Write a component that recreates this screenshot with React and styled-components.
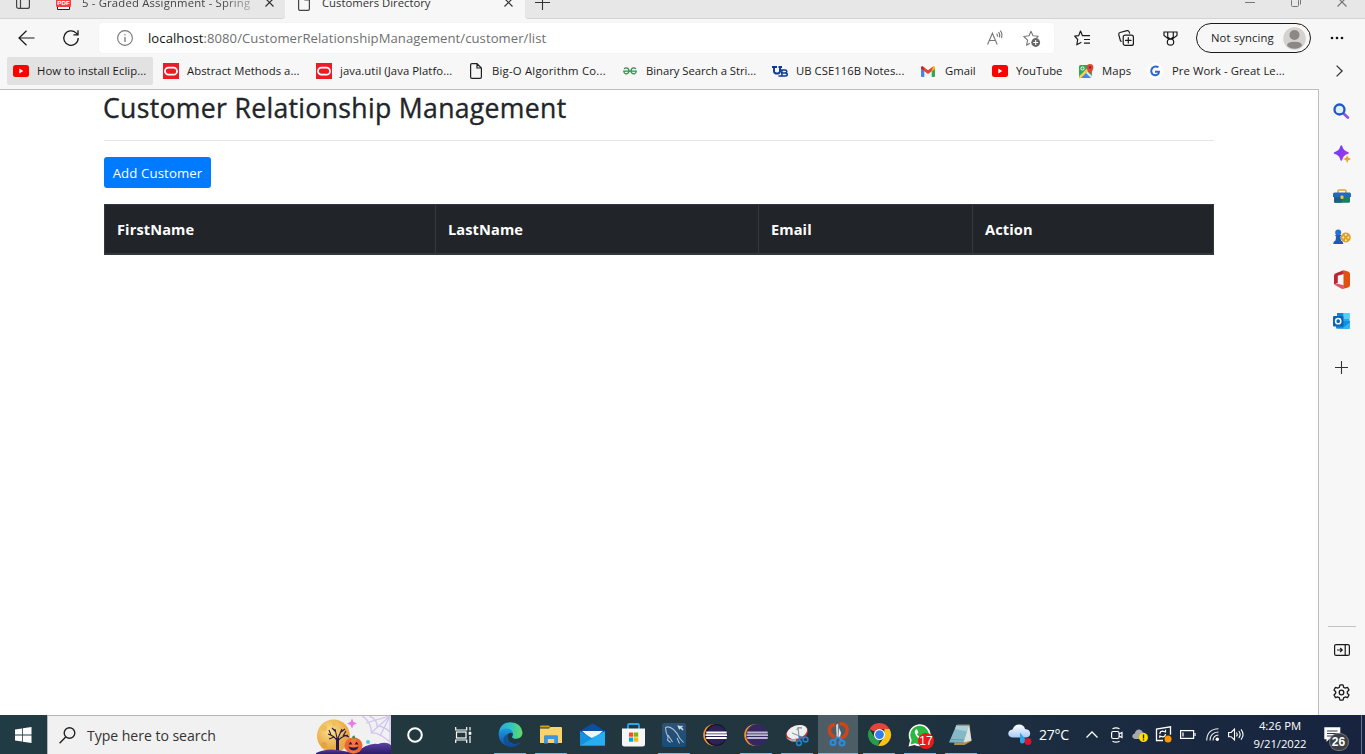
import React from "react";
import styled, { createGlobalStyle, css } from "styled-components";

const GlobalStyle = createGlobalStyle`
  * { box-sizing: border-box; }
  html, body { margin: 0; padding: 0; }
  body {
    width: 1365px;
    height: 754px;
    overflow: hidden;
    background: #fff;
    font-family: "Open Sans", "Noto Sans", sans-serif;
  }
  svg { display: block; flex: none; overflow: visible; }
`;

const Screen = styled.div`
  display: flex;
  flex-direction: column;
  width: 1365px;
  height: 754px;
  overflow: hidden;
`;

const Label = styled.span`
  display: block;
  flex: none;
  white-space: nowrap;
  font-size: ${(p) => p.$size || 11.3}px;
  letter-spacing: ${(p) => p.$ls || 0}px;
  color: ${(p) => p.$color || "#1b1b1b"};
`;

/* A fixed-width cell that centres its icon */
const Cell = styled.div`
  display: flex;
  flex: none;
  align-items: center;
  justify-content: center;
  width: ${(p) => p.$w}px;
  height: 100%;
`;

/* ---------- Tab strip ---------- */

const TabStrip = styled.div`
  display: flex;
  align-items: flex-end;
  height: 19px;
  flex: none;
  overflow: hidden;
  background: #f7f7f7;
`;

const StripSection = styled.div`
  display: flex;
  align-items: center;
  flex: none;
  width: ${(p) => p.$w}px;
  height: 32px;
  padding-bottom: 1px;
  background: ${(p) => (p.$active ? "#f7f7f7" : "#e7e7e7")};
  ${(p) => !p.$active && css`border-bottom: 1px solid #d3d3d3;`}
  border-radius: ${(p) => p.$radius || 0};
`;

const StripDivider = styled.div`
  width: 1px;
  height: 20px;
  background: #8b8b8b;
`;

const TabTitle = styled(Label)`
  width: ${(p) => p.$w}px;
  overflow: hidden;
  ${(p) => p.$fade && css`
    mask-image: linear-gradient(to right, #000 82%, rgba(0, 0, 0, 0.35));
  `}
`;

const Spacer = styled.div`
  flex: none;
  width: ${(p) => p.$w}px;
`;

/* ---------- Toolbar ---------- */

const Toolbar = styled.div`
  display: flex;
  align-items: center;
  height: 38px;
  flex: none;
  background: #f7f7f7;
`;

const AddressBar = styled.div`
  display: flex;
  align-items: center;
  width: 955px;
  height: 30px;
  margin-left: 1px;
  background: #fff;
  border-radius: 4px;
  box-shadow: 0 0 2px rgba(0, 0, 0, 0.06);
`;

const UrlText = styled(Label)`
  width: 834px;
  padding-left: 1px;
  b { font-weight: 400; color: #111; }
`;

const ProfilePill = styled.div`
  display: flex;
  align-items: center;
  justify-content: space-between;
  width: 115px;
  height: 30px;
  padding: 0 4px 0 14px;
  border: 1px solid #1a1a1a;
  border-radius: 15px;
`;

/* ---------- Bookmarks ---------- */

const BookmarkBar = styled.div`
  display: flex;
  align-items: center;
  height: 32px;
  flex: none;
  padding: 0 0 4px 7px;
  background: #f7f7f7;
`;

const BookmarkSlot = styled.div`
  flex: none;
  width: ${(p) => p.$w}px;
`;

const Bookmark = styled.div`
  display: flex;
  align-items: center;
  width: ${(p) => (p.$hover ? "146px" : "100%")};
  height: 28px;
  padding-left: 6px;
  border-radius: 2px;
  background: ${(p) => (p.$hover ? "#e2e2e2" : "transparent")};
`;

const BookmarkLabel = styled(Label)`
  padding-bottom: 2px;
`;

const BookmarkIcon = styled.div`
  display: flex;
  align-items: center;
  flex: none;
  width: ${(p) => p.$w || 24}px;
  height: 16px;
`;

/* ---------- Page and sidebar ---------- */

const Middle = styled.div`
  display: flex;
  height: 626px;
  flex: none;
`;

const Page = styled.main`
  width: 1319px;
  border-top: 1px solid #bdbdbd;
  border-right: 1px solid #bdbdbd;
  background: #fff;
  padding: 0 104px;
`;

const Heading = styled.h2`
  margin: 0 0 0 -1px;
  height: 50px;
  padding-top: 1px;
  font-size: 26.6px;
  letter-spacing: 0.32px;
  line-height: 35px;
  font-weight: 500;
  -webkit-text-stroke: 0.35px #212529;
  color: #212529;
  white-space: nowrap;
`;

const Rule = styled.hr`
  width: 1110px;
  margin: 0 0 16px;
  border: 0;
  border-top: 1px solid #e5e5e5;
`;

const AddButton = styled.button`
  display: block;
  width: 107px;
  height: 31px;
  margin: 0 0 16px;
  padding: 0;
  border: 0;
  border-radius: 3px;
  background: #007bff;
  color: #fff;
  font-family: inherit;
  font-size: 13.2px;
  letter-spacing: 0.12px;
  white-space: nowrap;
`;

const CustomerTable = styled.table`
  width: 1109px;
  table-layout: fixed;
  border-collapse: collapse;
`;

const HeadCell = styled.th`
  width: ${(p) => p.$w}px;
  height: 49px;
  padding: 0 12px;
  border: 1px solid #32383e;
  border-bottom-width: 2px;
  background: #212529;
  color: #fff;
  text-align: left;
  font-size: 14.6px;
  letter-spacing: 0.1px;
  font-weight: 700;
`;

const Sidebar = styled.aside`
  display: flex;
  flex-direction: column;
  align-items: center;
  width: 46px;
  padding: 1px 1px 0 0;
  background: #f7f7f7;
`;

const SideItem = styled.div`
  display: flex;
  align-items: center;
  justify-content: center;
  height: ${(p) => p.$h || 42}px;
`;

const SideFooter = styled.div`
  display: flex;
  flex-direction: column;
  align-items: center;
  width: 28px;
  margin-top: auto;
  padding: 2px 0 2px;
  border-top: 1px solid #c2c2c2;
`;

/* ---------- Taskbar ---------- */

const Taskbar = styled.footer`
  display: flex;
  align-items: stretch;
  height: 39px;
  flex: none;
  background: linear-gradient(to right, #213b44 0%, #22383f 30%, #21353e 62%, #1b2c40 78%, #17233f 100%);
`;

const SearchBox = styled.div`
  display: flex;
  align-items: center;
  width: 344px;
  border-top: 1px solid #b5b5b5;
  border-left: 1px solid #b5b5b5;
  background: #f1f1f1;
  overflow: hidden;
`;

const SearchArt = styled.div`
  margin-left: auto;
`;

const AppSlot = styled.div`
  display: flex;
  align-items: center;
  justify-content: center;
  flex: none;
  width: 40px;
  margin-right: 1px;
  height: 39px;
  background: ${(p) => (p.$active ? "#4d5d66" : "transparent")};
  ${(p) => p.$open && css`
    background-image: linear-gradient(#76b9ed, #76b9ed);
    background-repeat: no-repeat;
    background-position: center bottom;
    background-size: ${p.$active ? 40 : 32}px 1px;
  `}
`;

const BadgeAnchor = styled.div`
  position: relative;
  display: flex;
`;

const Badge = styled.span`
  position: absolute;
  left: ${(p) => p.$x}px;
  top: ${(p) => p.$y}px;
  width: ${(p) => p.$w}px;
  height: ${(p) => p.$h}px;
  line-height: ${(p) => p.$h}px;
  border-radius: 10px;
  background: ${(p) => p.$bg};
  box-shadow: ${(p) => (p.$ring ? "0 0 0 1px #77797c" : "none")};
  color: #fff;
  text-align: center;
  font-size: 12px;
  font-weight: ${(p) => (p.$ring ? 700 : 400)};
  font-family: "Liberation Sans", sans-serif;
`;

const Clock = styled.div`
  display: flex;
  flex-direction: column;
  align-items: center;
  width: 64px;
  padding-top: 2px;
  line-height: 18px;
`;

const ShowDesktop = styled.div`
  width: 1px;
  margin-left: auto;
  margin-right: 3px;
  background: #67728a;
`;

/* ---------- Icons ---------- */

const Svg = ({ w = 16, h = w, vb, children, ...rest }) => (
  <svg width={w} height={h} viewBox={vb || `0 0 ${w} ${h}`} fill="none" {...rest}>
    {children}
  </svg>
);

const CloseIcon = ({ s = 9, c = "#333" }) => (
  <Svg w={s} stroke={c} strokeWidth="1.2"><path d={`M.5.5 ${s - 0.5} ${s - 0.5}M${s - 0.5}.5.5 ${s - 0.5}`} /></Svg>
);
const PlusIcon = ({ s = 13, c = "#333" }) => (
  <Svg w={s} stroke={c} strokeWidth="1.1"><path d={`M${s / 2} 0V${s}M0 ${s / 2}H${s}`} /></Svg>
);
const TabActions = () => (
  <Svg w={14} stroke="#444" strokeWidth="1.2"><rect x=".6" y=".6" width="12.8" height="12.8" rx="2" /><path d="M4.5 1v12.500" /></Svg>
);
const PdfIcon = () => (
  <Svg w={15} h={15}>
    <path d="M1.500 1h12v13.500h-12z" fill="#fff" stroke="#222" />
    <rect width="15" height="10" y="2" rx="1" fill="#f0403c" />
    <text x="7.500" y="9.800" fontSize="6.200" fontWeight="700" fill="#fff" textAnchor="middle" fontFamily="Liberation Sans">PDF</text>
  </Svg>
);
const DocIcon = ({ c = "#222" }) => (
  <Svg w={12} h={16} stroke={c} strokeWidth="1.200"><path d="M7 .6H2Q.6.6.6 2v12q0 1.400 1.400 1.400h8q1.400 0 1.400-1.400V5zM7 .6V5h4.400" /></Svg>
);
const BackIcon = () => (
  <Svg w={17} h={16} stroke="#1a1a1a" strokeWidth="1.200"><path d="M8.500.8 1 8l7.500 7.200M1 8h15.500" /></Svg>
);
const ReloadIcon = () => (
  <Svg w={16} h={16} stroke="#1a1a1a" strokeWidth="1.300"><path d="M15.200 8A7.200 7.200 0 1 1 13 2.900l1.800 1.700M15 .2v4.600h-4.600" /></Svg>
);
const InfoIcon = () => (
  <Svg w={16} stroke="#777" strokeWidth="1.100"><circle cx="8" cy="8" r="7.400" /><path d="M8 7v5M8 4.200v1.300" strokeWidth="1.300" /></Svg>
);
const ReadAloud = () => (
  <Svg w={16} h={14} stroke="#777" strokeWidth="1.100">
    <path d="M.6 13.500 5.400 2.200 10.200 13.500M2.300 9.500h6.200M9.600 2.500q1.300 1.500.6 3.300M11.500 1q2 2.300.9 5.400M13.300-.3q2.600 3.200 1.100 7.300" />
  </Svg>
);
const StarAdd = () => (
  <Svg w={17} h={17}>
    <path d="M8 1.200 10 5.700l5.200.6-1.800 1.900M6.800 13.200 3.600 15.200 4.600 10.100.8 6.500 6 5.800 8 1.200" stroke="#777" strokeWidth="1.100" strokeLinejoin="round" />
    <circle cx="12.700" cy="12.500" r="4.400" fill="#666" /><path d="M12.700 10v5M10.200 12.500h5" stroke="#fff" strokeWidth="1.100" />
  </Svg>
);
const StarList = () => (
  <Svg w={17} h={16} stroke="#1a1a1a" strokeWidth="1.200" strokeLinejoin="round">
    <path d="M8.500 5.700 6.500 1 4.700 5.600.7 6.200 3.700 9.500 2.800 14.800 7.300 12.300M6.500 1l2 4.700H16M10 9.500h6M10 13.200h6" />
  </Svg>
);
const CollectionsIcon = () => (
  <Svg w={16} h={16} stroke="#1a1a1a" strokeWidth="1.200" strokeLinecap="round">
    <rect x="5.200" y="5.200" width="10.200" height="10.200" rx="2" /><path d="M10.300 7.500v5.600M7.500 10.300h5.600M3.300 11.300 2.500 11 .8 4.800Q.4 3 2 2.500L9 .7q1.600-.4 2.200 1.200l.4 1.200" />
  </Svg>
);
const RewardsIcon = () => (
  <Svg w={15} h={15} stroke="#1a1a1a" strokeWidth="1.200">
    <path d="M1 1h13v3.500L9.500 8h-4L1 4.500zM4.700 1v5L7 8M10.300 1v5L8 8" /><circle cx="7.500" cy="11" r="3.200" />
  </Svg>
);
const Avatar = () => (
  <Svg w={23} h={23}><circle cx="11.500" cy="11.500" r="11.300" fill="#d4d1ce" /><circle cx="11.500" cy="8" r="5" fill="#8b8886" /><path d="M4 18.800q0-4 7.500-4t7.500 4q-3 3-7.500 3t-7.500-3" fill="#8b8886" /></Svg>
);
const DotsIcon = () => (
  <Svg w={14} h={4} fill="#111"><circle cx="2" cy="2" r="1.300" fill="#111" /><circle cx="7" cy="2" r="1.300" fill="#111" /><circle cx="12" cy="2" r="1.300" fill="#111" /></Svg>
);

const YouTubeIcon = () => (<Svg w={16} h={12}><rect width="16" height="12" rx="2.500" fill="#f00" /><path d="M6.300 3.500v5l4-2.500z" fill="#fff" /></Svg>);
const OracleIcon = () => (<Svg w={16}><rect width="16" height="16" fill="#ed1c24" /><rect x="2" y="4.700" width="12" height="7" rx="3.500" stroke="#fff" strokeWidth="1.800" /></Svg>);
const GfgIcon = () => (
  <Svg w={14} h={8} stroke="#2f8d46" strokeWidth="1.300">
    <path d="M1 1.700Q3 .2 5 1.400 6.500 2.800 5.800 5 4.700 7.300 2.500 6.800 1 6.400.8 4.200H13.200Q13 6.400 11.500 6.800 9.300 7.300 8.200 5 7.500 2.800 9 1.400q2-1.200 4 .3" />
  </Svg>
);
const UbIcon = () => (
  <Svg w={16} h={11} stroke="#0b3a9b">
    <path d="M0 1h5M6.500 1h3.500M2 1v4.500q.3 2 3 2t3-2V1" strokeWidth="1.900" /><path d="M8.500 4H13q1.800 0 1.800 1.500T13 7H9m4 0q2.300 0 2.300 1.500T13 10H6.500M9.900 4v6" strokeWidth="1.500" />
  </Svg>
);
const GmailIcon = () => (
  <Svg w={14} h={11}>
    <path d="M0 2.500V10q0 1 1 1h2.300V5z" fill="#4285f4" /><path d="M14 2.500V10q0 1-1 1h-2.300V5z" fill="#34a853" />
    <path d="M0 1.500Q0 0 1.300 0L3.300 1.500V5.300L0 2.800z" fill="#c5221f" /><path d="M14 1.500Q14 0 12.700 0L10.700 1.500V5.300L14 2.800z" fill="#fbbc04" />
    <path d="M2 .4 7 4.200 12 .4 10.700 5.300 7 8 3.300 5.300z" fill="#ea4335" />
  </Svg>
);
const MapsIcon = () => (
  <Svg w={15} h={15}>
    <rect y="1" width="13" height="13" rx="1.500" fill="#34a853" /><path d="m2 14 5-5.500 5.500 5.500z" fill="#4285f4" /><path d="M0 12.500 11.500 1 13 3 2 14H1z" fill="#fbd14b" /><path d="M8.500 7.500 13 12v2h-1L7 9z" fill="#e8e8e8" />
    <circle cx="3.500" cy="4.500" r="1.600" stroke="#fff" /><path d="M11 9.800Q7.700 6 7.700 3.400a3.300 3.300 0 0 1 6.600 0Q14.300 6 11 9.800" fill="#e4453a" /><circle cx="11" cy="3.400" r="1.200" fill="#8f211b" />
  </Svg>
);
const GreatIcon = () => (
  <Svg w={16}><circle cx="8" cy="8" r="8" fill="#fff" /><path d="M11.500 4.300Q8 2.300 5.300 5 3.200 8 5.200 11q3 2.400 5.800.3 1-1 1-2.600H8" stroke="#2c65d6" strokeWidth="1.900" /></Svg>
);
const ChevronRight = () => (<Svg w={7} h={12} stroke="#333" strokeWidth="1.300"><path d="m.6.6 5.500 5.400-5.500 5.400" /></Svg>);

const SideSearch = () => (
  <Svg w={17} h={17}><path d="m10 10 4.800 4.500" stroke="#8d55e0" strokeWidth="2.800" strokeLinecap="round" /><circle cx="6.500" cy="6.500" r="5" fill="#dff0fb" stroke="#1c57c8" strokeWidth="2.300" /></Svg>
);
const SideSparkle = () => (
  <Svg w={18} h={18}>
    <defs><linearGradient id="spark" x1="0" x2="1" y2="1"><stop stopColor="#4b5bf0" /><stop offset=".5" stopColor="#8f35f2" /><stop offset="1" stopColor="#b543e8" /></linearGradient></defs>
    <path d="M8.300.3Q9 .3 9.400 1.600 10.400 5.800 14.700 7q1.300.4 1.300 1t-1.300 1Q10.400 10.200 9.400 14.400q-.4 1.300-1.100 1.300T7.200 14.400Q6.200 10.200 1.900 9 .6 8.600.6 8t1.300-1Q6.200 5.800 7.200 1.600 7.600.3 8.300.3" fill="url(#spark)" />
    <path d="M14.200 10.300 15.400 12.800l2.800 1.200-2.800 1.200-1.200 2.800-1.200-2.800-2.800-1.200 2.800-1.200z" fill="#e9a52d" />
  </Svg>
);
const SideTools = () => (
  <Svg w={18} h={14}>
    <path d="M5 4V2.200Q5 1 6.300 1h5.400Q13 1 13 2.200V4" stroke="#e3a62b" strokeWidth="1.600" /><rect x="1" y="5" width="16" height="8.800" rx="1.300" fill="#16805f" /><rect x="1" y="5" width="8" height="8.800" rx="1.300" fill="#17657c" />
    <path d="M0 5q0-1.500 1.500-1.500h15Q18 3.500 18 5v3H0z" fill="#2268c5" /><rect x="7.500" y="6.500" width="3" height="3.500" rx="1" fill="#f2c047" />
  </Svg>
);
const SideGames = () => (
  <Svg w={18} h={16}>
    <circle cx="12.800" cy="8.500" r="5" fill="#dca029" /><g fill="#fff2c8"><circle cx="12.800" cy="5.800" r="1" /><circle cx="12.800" cy="11.200" r="1" /><circle cx="10.300" cy="8.500" r="1" /><circle cx="15.300" cy="8.500" r="1" /></g>
    <circle cx="5.200" cy="3.500" r="3" fill="#266fd8" /><path d="M2.300 6h5.800v1.300H7.300L8 11.500q2.300.7 2.300 3.500H.2q0-2.800 2.300-3.500l.7-4.200h-.9z" fill="#1d59b8" />
  </Svg>
);
const SideOffice = () => (
  <Svg w={16} h={19}>
    <path d="M9.500.2 14 1.400Q16 2 16 4v11q0 2-2 2.600l-4.500 1.200z" fill="#e0500f" /><path d="M9.500.2 1.800 3.300Q0 4 0 6v8.500l3.800-1.600V5.800l6-1.800z" fill="#bf2533" /><path d="M0 14.500l3.800-.8 6 1.500v3.500L8 19z" fill="#e0556a" />
  </Svg>
);
const SideOutlook = () => (
  <Svg w={17} h={16}>
    <rect x="4" width="12.500" height="13" rx="1" fill="#28a8ea" /><path d="M4 0h6.300v6H4z" fill="#1583cf" /><path d="M10.300 0h6.200v6h-6.200z" fill="#4fd0fa" /><path d="M3 8h14v6.500q0 1.300-1.300 1.300H4.300Q3 15.800 3 14.500z" fill="#1290df" /><path d="m9 15.800 8-6.500v5.200q0 1.300-1.300 1.300z" fill="#31b6f3" />
    <rect y="3" width="10.500" height="10.500" rx="1" fill="#0d64b7" /><circle cx="5.200" cy="8.200" r="2.600" stroke="#fff" strokeWidth="1.500" />
  </Svg>
);
const SidePanel = () => (
  <Svg w={16} h={12} stroke="#1a1a1a" strokeWidth="1.200"><rect x=".6" y=".6" width="14.800" height="10.800" rx="1.500" /><path d="M11.200 1v10M3 6h5.200M6.200 4l2 2-2 2" /></Svg>
);
const GearIcon = () => (
  <Svg w={17} h={17} stroke="#1a1a1a" strokeWidth="1.300" strokeLinejoin="round">
    <path d="M7 .9h3l.7 2.400q.8.300 1.400.8l2.400-.7 1.500 2.600-1.700 1.700v1.600l1.700 1.700-1.500 2.600-2.400-.7q-.6.500-1.400.8L10 16.100H7l-.7-2.400q-.8-.3-1.400-.8l-2.400.7L1 11l1.700-1.700V7.700L1 6l1.500-2.600 2.400.7q.6-.5 1.400-.8z" /><circle cx="8.500" cy="8.500" r="2.300" />
  </Svg>
);

const WindowsIcon = () => (
  <Svg w={17} h={16}><path fill="#fff" d="M0 2.400 7 1.400V7.600H0zM7.800 1.300 16.500 0v7.600H7.800zM0 8.400h7v6.200l-7-1zM7.800 8.400h8.700V16l-8.700-1.300z" /></Svg>
);
const TaskSearch = () => (<Svg w={17} h={17} stroke="#222" strokeWidth="1.400"><circle cx="10.500" cy="6" r="5.300" /><path d="M6.700 10 .6 16.300" /></Svg>);

const Halloween = () => (
  <Svg w={75} h={38}>
    <defs>
      <radialGradient id="moon" cx=".4" cy=".35"><stop stopColor="#fbe18a" /><stop offset="1" stopColor="#e9ab48" /></radialGradient>
      <linearGradient id="hill" x1="0" x2="0" y2="1"><stop stopColor="#5c43a0" /><stop offset="1" stopColor="#2b1b6b" /></linearGradient>
    </defs>
    <g stroke="#d3c3ef" strokeWidth="1.300"><path d="M46 0Q55 5 55.500 17q7-1 18.500 9M53 0q8 3 8 10 7 0 13 6M74 0 55 17M74 0 64 20M74 0 50 7M74 0V28" /></g>
    <circle cx="17.500" cy="20" r="16.500" fill="url(#moon)" /><circle cx="8" cy="12" r="3" fill="#edbd58" /><circle cx="18" cy="8" r="2" fill="#edbd58" /><circle cx="8" cy="29" r="3" fill="#e6a045" />
    <g stroke="#24184f" strokeWidth="1.100"><path d="M21.500 36V22" strokeWidth="3" /><path d="M21 25Q19 20 12 18M15 19l-2-5M18 21l-5 2M21 22 19 13M20 16l-4-4M22 22l4-9M25 16l4-3M22 25q2-4 10-6M27 20l3-5M28 19l5 2" /></g>
    <path d="M0 37Q10 32 22 34T42 38H0z" fill="url(#hill)" />
    <path d="M38 38Q52 26 62 28 70 25 75 29V38z" fill="url(#hill)" />
    <ellipse cx="37.500" cy="29.500" rx="9" ry="8" fill="#f06530" /><ellipse cx="37.500" cy="29.500" rx="4" ry="8" fill="#f5793a" /><path d="M36.500 22.500q-1-3 2-3l1 3z" fill="#3b8e43" /><path d="m32.500 28.500 2-3 2 3zM38.500 28.500l2-3 2 3zM32.500 30.500q5 2 10 0-1 4-5 4t-5-4" fill="#35184b" />
    <path d="M36 2.500 37.500 6 41 7.500 37.500 9 36 12.500 34.500 9 31 7.500 34.500 6z" fill="#e979ee" /><circle cx="52" cy="26" r="2" fill="#50c9db" />
  </Svg>
);

const CortanaIcon = () => (<Svg w={16}><circle cx="8" cy="8" r="6.800" stroke="#fff" strokeWidth="2" /></Svg>);
const TaskViewIcon = () => (
  <Svg w={17} h={16} stroke="#fff" strokeWidth="1.200"><path d="M.7 0v3h11V0M.7 16v-3h11v3M15 0v3.500M15 9v7" /><rect x="1.500" y="5" width="9.500" height="6" /><rect x="13.700" y="4.800" width="2.600" height="3" fill="#fff" stroke="none" /></Svg>
);
const EdgeIcon = () => (
  <Svg w={25} h={25}>
    <defs><linearGradient id="edgeTop" x1="0" x2="1"><stop stopColor="#2aa7e0" /><stop offset=".55" stopColor="#31c6bd" /><stop offset="1" stopColor="#67dc5c" /></linearGradient><linearGradient id="edgeBody" x1="0" x2="0" y2="1"><stop stopColor="#1b9de2" /><stop offset="1" stopColor="#0d4fa0" /></linearGradient></defs>
    <path d="M.6 11Q2 .5 12.500.3 23 .5 24.500 10.500 24.500 16.500 18 16.800q-5 0-3.500-3Q16 11.500 13 9.500 8 5.500.6 11" fill="url(#edgeTop)" />
    <path d="M.5 12Q2 6.500 8 6.500q6.500.3 6.800 5-3-2-5 1-2 6 4.500 9 4.500 1.500 8.200-1.300-4 5-10 4.800Q1 23 .5 12" fill="url(#edgeBody)" />
    <path d="M10 12Q7.500 16 11 20q4.500 4 11.500.2-4 5-10 4.800Q5 23 5.500 17 6 13 10 12" fill="#124a91" opacity=".75" />
  </Svg>
);
const FolderIcon = () => (
  <Svg w={22} h={19}><path d="M0 1.500Q0 .5 1 .5h8l1.500 2H0z" fill="#d99a24" /><path d="M0 3.500h9L10.500 2H21q1 0 1 1v15H0z" fill="#fbd36b" /><path d="M4 18.500V11.500q0-1.200 1.200-1.200h11.600q1.200 0 1.200 1.200v7h-3.800V14H7.800v4.500z" fill="#3f94dc" /></Svg>
);
const MailIcon = () => (
  <Svg w={25} h={23}><path d="M0 8 12.500.3 25 8v5H0z" fill="#0c4f9e" /><path d="M2 8h21L12.500 17z" fill="#f3f6f8" /><path d="M0 8.200 12.500 16 25 8.200V22.500H0z" fill="#1fa4ec" /><path d="m0 22.500 12.500-8L25 8.200v14.300z" fill="#27adf1" /><path d="M0 8.200v14.300l12.500-7z" fill="#1592df" /></Svg>
);
const StoreIcon = () => (
  <Svg w={23} h={24}><path d="M6 6V2.200Q6 1 7.200 1h8.600Q17 1 17 2.200V6" stroke="#25a9e8" strokeWidth="1.800" /><path d="M0 5.500h23V21q0 2.500-2.500 2.500h-18Q0 23.500 0 21z" fill="#f6f6f6" /><path fill="#f14f21" d="M7 9.500h4.200v4.200H7z" /><path fill="#7eb900" d="M12 9.500h4.200v4.200H12z" /><path fill="#00a3ee" d="M7 14.500h4.200v4.200H7z" /><path fill="#feb800" d="M12 14.500h4.200v4.200H12z" /></Svg>
);
const MysqlIcon = () => (
  <Svg w={24} h={24}><defs><linearGradient id="sea" x1="0" x2="0" y2="1"><stop stopColor="#2e5273" /><stop offset="1" stopColor="#164d7d" /></linearGradient></defs><rect width="24" height="24" rx="2.500" fill="url(#sea)" /><path d="M8.500 19.500 5.500 17 6 14Q3.500 9 3.500 4.500 7 2.500 11.500 6.500q4.500 4 6 8.500l4 4.500M6 12l4.500 7M15 15l2.500 5.500" stroke="#aebdc9" strokeWidth="1.100" /><path d="m17.500 3 3.500 4M16 2.500l1.500 3L20.500 3" stroke="#d2dde4" strokeWidth="1.500" /></Svg>
);
const EclipseIcon = ({ dim }) => (
  <Svg w={24} h={24}>
    <circle cx="11" cy="12" r="10.800" fill="#f6942b" /><circle cx="13" cy="12" r="11" fill={dim ? "#382b68" : "#111126"} /><circle cx="13.500" cy="12" r="10" fill={dim ? "#352760" : "#2c2255"} />
    <path d="M3.200 9.500h20.500M2.500 12.200h21.500M3.200 15h20.500" stroke={dim ? "#bcb9c8" : "#fff"} strokeWidth="1.800" />
  </Svg>
);
const SnipOval = () => (
  <Svg w={24} h={24}>
    <ellipse cx="12" cy="10" rx="11.500" ry="7.500" fill="#c83438" transform="rotate(-18 12 10)" /><ellipse cx="12" cy="9" rx="10.500" ry="6.500" fill="#edf0f1" transform="rotate(-18 12 9)" /><path d="M1 14.500q5 3 10 1v3q-6 1-10-4" fill="#aeb0b2" />
    <path d="m14 14-1-10M17 14 7 10M17 5q-5-1-5 2" stroke="#929a9e" strokeWidth="1.300" /><circle cx="14" cy="20" r="2.400" stroke="#277fc5" strokeWidth="1.600" /><circle cx="20.500" cy="16.500" r="2.400" stroke="#277fc5" strokeWidth="1.600" /><path d="m14.500 18 0-4 4 1" stroke="#277fc5" strokeWidth="1.800" />
  </Svg>
);
const SnipActive = () => (
  <Svg w={20} h={25}>
    <path d="M7 2.500Q1 3.500 1.500 8.500T7 15M11.500 1.800q6.500-.5 7.500 5 1 7-6.500 9.500" stroke="#cf4517" strokeWidth="3.500" />
    <path d="M8.700 16 8 3 10.200 1.500 10.500 16z" fill="#cfd4d8" /><path d="m10.500 16 .8-10 1.700 5-1.200 5z" fill="#eff2f4" /><path d="M9.500 14.500 7 18m3.500-3 3 3" stroke="#2d8ddd" strokeWidth="2" /><circle cx="5" cy="20.500" r="2.500" stroke="#2d8ddd" strokeWidth="2" /><circle cx="14" cy="21" r="2.500" stroke="#2d8ddd" strokeWidth="2" />
  </Svg>
);
const ChromeIcon = () => (
  <Svg w={23} h={23}>
    <path d="M1.500 6A11.300 11.300 0 0 1 21.500 6H11.500L7 9z" fill="#e3453a" /><path d="M1.500 6 7 15l4.500 2.500-1.500 5.400A11.300 11.300 0 0 1 1.500 6" fill="#299b4d" /><path d="M21.500 6A11.300 11.300 0 0 1 10 22.900L16.300 14V6z" fill="#fbc116" />
    <circle cx="11.500" cy="11.600" r="5.600" fill="#fff" /><circle cx="11.500" cy="11.600" r="4.400" fill="#327ee8" />
  </Svg>
);
const WhatsAppIcon = () => (
  <Svg w={24} h={24}><path d="M.5 23.500 2 17.500A11 11 0 1 1 6.500 22z" fill="#fff" /><path d="M2.500 21.500 3.700 17A9.300 9.300 0 1 1 7.300 20.300z" fill="#2cb742" /><path d="M8 6.500Q6 8 7 10.500 9.500 16 14.500 17q2.500.3 3-2.300l-3-1.500-1.500 1.600Q10 13.500 9 11l1.300-1.500L9 6.300z" fill="#fff" /></Svg>
);
const NotepadIcon = () => (
  <Svg w={24} h={23}><path d="M8.500 1.500h12L22.500 18l-7 4H5z" fill="#b98c46" /><path d="M7.500 2H20l-5.500 17.500H0z" fill="#86b9c8" /><path d="M7.500 2H20l-2 6.500L6 6z" fill="#a9d0d9" /><path d="M20 2 22.500 17.500 14.500 19.500z" fill="#dce3e4" /><path d="M9 1v2M11 1v2M13 1v2M15 1v2M17 1v2M19 1v2" stroke="#555" strokeWidth=".8" /><path d="m1 19 13.500.5M2 16.500l13 .5" stroke="#568fa2" strokeWidth=".8" /></Svg>
);

const WeatherIcon = () => (
  <Svg w={24} h={21}>
    <defs><linearGradient id="cloud" x1="0" x2="0" y2="1"><stop stopColor="#fff" /><stop offset="1" stopColor="#a8c8f5" /></linearGradient></defs>
    <path d="M5 13.500Q0 13 .3 9.300.7 6 4.500 5.500 6.500.3 11 .5q5 .2 6 4.500 5 .3 5.200 4.500 0 3.500-4 4z" fill="url(#cloud)" /><path d="M12 8.500l0 9q0 2 2 2 2.500 0 4-3.500z" fill="#29a4e4" /><circle cx="20" cy="17.500" r="3.400" fill="#d9142f" />
  </Svg>
);
const ChevronUp = () => (<Svg w={12} h={7} stroke="#fff" strokeWidth="1.300"><path d="M.5 6.500 6 1l5.500 5.500" /></Svg>);
const MeetIcon = () => (<Svg w={12} h={16} stroke="#fff" strokeWidth="1.200"><rect x=".6" y="4.500" width="7.500" height="7" rx="1.500" /><path d="m8 7 3-1.500v5L8 9M1.500 1.800q3.500-2 7 0M1.500 14.200q3.500 2 7 0" /></Svg>);
const CloudWarn = () => (<Svg w={16} h={14}><path d="M3 11Q0 10 .3 7.700.8 6 2.700 5.500 4 1 7.500 1.500 10 1.800 11 4.500q3 .3 3.200 3L12 11z" fill="#a5a9ad" /><circle cx="11.500" cy="9.500" r="4.500" fill="#ffe000" /><path d="M11.500 6.500v4M11.500 11.200v1.300" stroke="#222" strokeWidth="1.300" /></Svg>);
const SyncIcon = () => (<Svg w={17} h={17}><path d="M8 14.500H1.500V3L15.500.8v8" stroke="#fff" strokeWidth="1.300" /><path d="M4.800 8q.3-2.800 2.800-2.800L10.500 6V3.800M10.500 8q-.3 2.800-2.800 2.800L4.800 10v2" stroke="#fff" strokeWidth="1.200" /><circle cx="13" cy="13" r="3.500" fill="#ff9800" /></Svg>);
const BatteryIcon = () => (<Svg w={16} h={9} stroke="#fff" strokeWidth="1.200"><rect x=".6" y=".6" width="13" height="7.800" /><path d="M15 3v3M3 2.500v4" /></Svg>);
const WifiIcon = () => (<Svg w={13} h={13} stroke="#fff"><path d="M.7 12.500Q1 1 12.500.7M4 12.500Q4.200 4.300 12.500 4M7 12.500Q7.300 7.300 12.500 7" strokeWidth="1.100" opacity=".9" /><circle cx="11.300" cy="11.300" r="1.700" fill="#fff" stroke="none" /></Svg>);
const SoundIcon = () => (<Svg w={17} h={13} stroke="#fff" strokeWidth="1.100"><path d="M.6 4.500h2.500L6.500 1v11L3.100 8.700H.6zM8.500 4.500q1.400 2 0 4M10.800 3q2.700 3.500 0 7M13 1.300q4 5.200 0 10.400" /></Svg>);
const NoticeIcon = () => (<Svg w={17} h={16}><path d="M.3.3h16v12H5L2.500 15v-2.700H.3z" fill="#fff" /><path d="M3 4h10.500M3 6.500h10.500M3 9h8" stroke="#17233f" strokeWidth=".9" /></Svg>);

/* ---------- Data ---------- */

const bookmarks = [
  { text: "How to install Eclip...", icon: <YouTubeIcon />, w: 150, hover: true, ls: 0.06 },
  { text: "Abstract Methods a...", icon: <OracleIcon />, w: 153, ls: 0.05 },
  { text: "java.util (Java Platfo...", icon: <OracleIcon />, w: 154, ls: 0.07 },
  { text: "Big-O Algorithm Co...", icon: <DocIcon />, w: 153, iw: 22, ls: 0.22 },
  { text: "Binary Search a Stri...", icon: <GfgIcon />, w: 149, iw: 23, ls: -0.04 },
  { text: "UB CSE116B Notes...", icon: <UbIcon />, w: 149, ls: 0.04 },
  { text: "Gmail", icon: <GmailIcon />, w: 71 },
  { text: "YouTube", icon: <YouTubeIcon />, w: 87 },
  { text: "Maps", icon: <MapsIcon />, w: 68, iw: 23, ls: 0.1 },
  { text: "Pre Work - Great Le...", icon: <GreatIcon />, w: 188, iw: 25, ls: 0.06 },
];

const columns = [
  { name: "FirstName", w: 331 },
  { name: "LastName", w: 323 },
  { name: "Email", w: 214 },
  { name: "Action", w: 241 },
];

const apps = [
  { icon: <EdgeIcon />, open: true },
  { icon: <FolderIcon />, open: true },
  { icon: <MailIcon /> },
  { icon: <StoreIcon /> },
  { icon: <MysqlIcon />, open: true },
  { icon: <EclipseIcon /> },
  { icon: <EclipseIcon dim />, open: true },
  { icon: <SnipOval />, open: true },
  { icon: <SnipActive />, open: true, active: true },
  { icon: <ChromeIcon />, open: true },
  { icon: <WhatsAppIcon />, open: true, badge: "17" },
  { icon: <NotepadIcon />, open: true },
];

export default function App() {
  return (
    <>
      <GlobalStyle />
      <Screen>
        <TabStrip>
          <StripSection $w={285} $radius="0 0 4px 0">
            <Cell $w={46}><TabActions /></Cell>
            <StripDivider />
            <Spacer $w={10} />
            <PdfIcon />
            <Spacer $w={11} />
            <TabTitle $w={169} $fade $color="#444" $ls={0.18}>5 - Graded Assignment - Spring</TabTitle>
            <Cell $w={36}><CloseIcon /></Cell>
          </StripSection>
          <StripSection $w={240} $active>
            <Spacer $w={13} />
            <DocIcon c="#444" />
            <Spacer $w={12} />
            <TabTitle $w={182} $color="#333">Customers Directory</TabTitle>
            <CloseIcon />
          </StripSection>
          <StripSection $w={840} $radius="0 0 0 4px">
            <Cell $w={35}><PlusIcon s={15} /></Cell>
            <Spacer $w={667} />
            <Cell $w={46}><Svg w={10} h={2} stroke="#777"><path d="M0 1.500h10" /></Svg></Cell>
            <Cell $w={46}><Svg w={10} h={10} stroke="#777"><rect x=".5" y="2.500" width="7" height="7" rx="1" /><path d="M2.500.5H8q1.500 0 1.500 1.500v5.500" /></Svg></Cell>
            <Cell $w={46}><CloseIcon s={10} c="#777" /></Cell>
          </StripSection>
        </TabStrip>

        <Toolbar>
          <Spacer $w={5} />
          <Cell $w={43}><BackIcon /></Cell>
          <Cell $w={45}><ReloadIcon /></Cell>
          <Spacer $w={5} />
          <AddressBar>
            <Spacer $w={4} />
            <Cell $w={44}><InfoIcon /></Cell>
            <UrlText $size={13.1} $ls={0.065} $color="#6f6f6f"><b>localhost</b>:8080/CustomerRelationshipManagement/customer/list</UrlText>
            <Cell $w={28}><ReadAloud /></Cell>
            <Cell $w={44}><StarAdd /></Cell>
          </AddressBar>
          <Spacer $w={6} />
          <Cell $w={44}><StarList /></Cell>
          <Cell $w={44}><CollectionsIcon /></Cell>
          <Cell $w={44}><RewardsIcon /></Cell>
          <Spacer $w={4} />
          <ProfilePill><BookmarkLabel $ls={0.1}>Not syncing</BookmarkLabel><Avatar /></ProfilePill>
          <Spacer $w={4} />
          <Cell $w={44}><DotsIcon /></Cell>
        </Toolbar>

        <BookmarkBar>
          {bookmarks.map((b) => (
            <BookmarkSlot key={b.text} $w={b.w}>
              <Bookmark $hover={b.hover}>
                <BookmarkIcon $w={b.iw}>{b.icon}</BookmarkIcon>
                <BookmarkLabel $ls={b.ls}>{b.text}</BookmarkLabel>
              </Bookmark>
            </BookmarkSlot>
          ))}
          <Spacer $w={7} />
          <ChevronRight />
        </BookmarkBar>

        <Middle>
          <Page>
            <Heading>Customer Relationship Management</Heading>
            <Rule />
            <AddButton>Add Customer</AddButton>
            <CustomerTable>
              <thead>
                <tr>{columns.map((c) => <HeadCell key={c.name} $w={c.w}>{c.name}</HeadCell>)}</tr>
              </thead>
            </CustomerTable>
          </Page>
          <Sidebar>
            <SideItem><SideSearch /></SideItem>
            <SideItem $h={43}><SideSparkle /></SideItem>
            <SideItem $h={41}><SideTools /></SideItem>
            <SideItem><SideGames /></SideItem>
            <SideItem><SideOffice /></SideItem>
            <SideItem><SideOutlook /></SideItem>
            <SideItem $h={50}><PlusIcon s={13} /></SideItem>
            <SideFooter>
              <SideItem><SidePanel /></SideItem>
              <SideItem><GearIcon /></SideItem>
            </SideFooter>
          </Sidebar>
        </Middle>

        <Taskbar>
          <Cell $w={47}><WindowsIcon /></Cell>
          <SearchBox>
            <Spacer $w={11} />
            <TaskSearch />
            <Spacer $w={11} />
            <Label $size={14.1} $ls={-0.05} $color="#333">Type here to search</Label>
            <SearchArt><Halloween /></SearchArt>
          </SearchBox>
          <Cell $w={48}><CortanaIcon /></Cell>
          <Cell $w={48}><TaskViewIcon /></Cell>
          <Spacer $w={3} />
          {apps.map((a, i) => (
            <AppSlot key={i} $open={a.open} $active={a.active}>
              <BadgeAnchor>
                {a.icon}
                {a.badge && <Badge $x={10} $y={10} $w={16} $h={16} $bg="#f21717">{a.badge}</Badge>}
              </BadgeAnchor>
            </AppSlot>
          ))}
          <Spacer $w={26} />
          <Cell $w={24}><WeatherIcon /></Cell>
          <Spacer $w={7} />
          <Cell $w={30}><Label $size={14.1} $ls={-0.3} $color="#fff">27°C</Label></Cell>
          <Spacer $w={11} />
          <Cell $w={24}><ChevronUp /></Cell>
          <Cell $w={25}><MeetIcon /></Cell>
          <Cell $w={22}><CloudWarn /></Cell>
          <Cell $w={25}><SyncIcon /></Cell>
          <Cell $w={24}><BatteryIcon /></Cell>
          <Cell $w={25}><WifiIcon /></Cell>
          <Cell $w={22}><SoundIcon /></Cell>
          <Spacer $w={1} />
          <Clock>
            <Label $color="#fff">4:26 PM</Label>
            <Label $color="#fff" $ls={-0.05}>9/21/2022</Label>
          </Clock>
          <Spacer $w={10} />
          <Cell $w={20}>
            <BadgeAnchor>
              <NoticeIcon />
              <Badge $x={6} $y={7} $w={18} $h={16} $bg="#3c3f43" $ring>26</Badge>
            </BadgeAnchor>
          </Cell>
          <ShowDesktop />
        </Taskbar>
      </Screen>
    </>
  );
}
